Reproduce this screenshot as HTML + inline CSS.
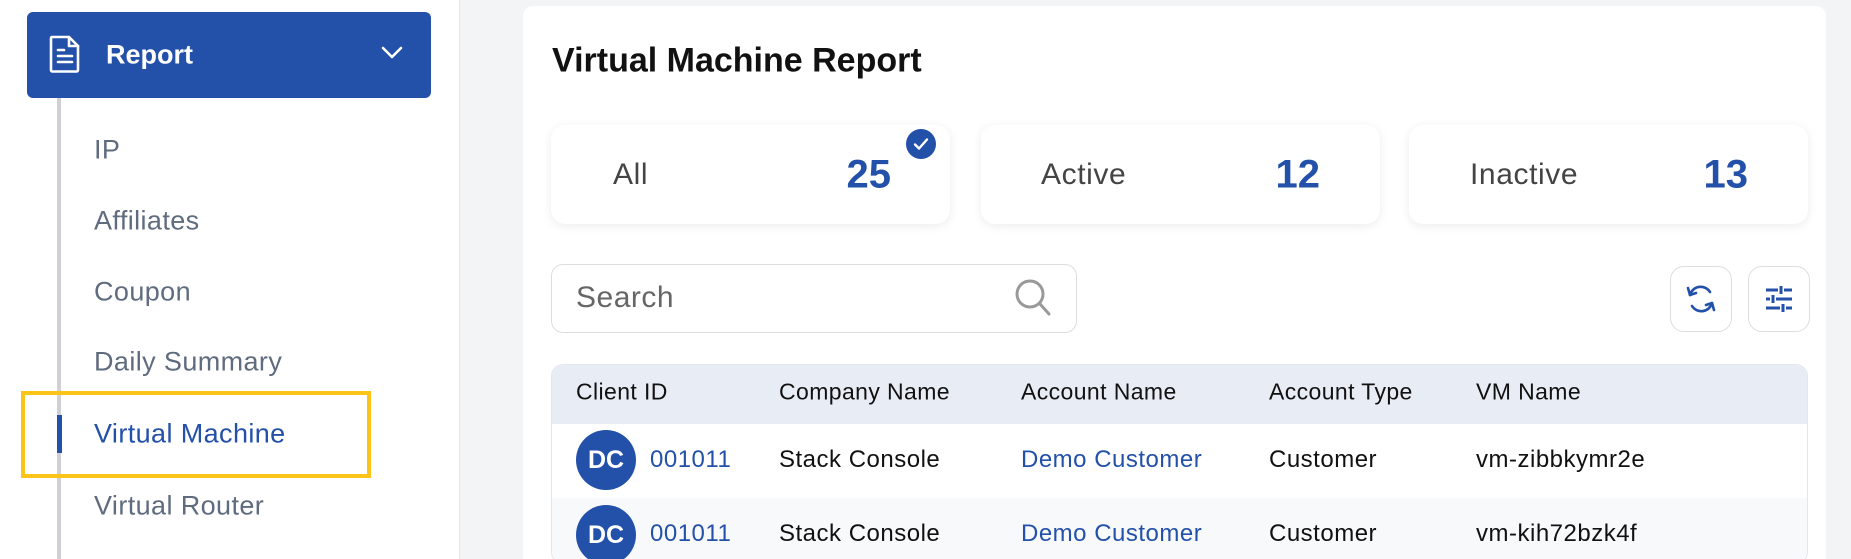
<!DOCTYPE html>
<html style="overflow:hidden"><head><style>
*{box-sizing:border-box;margin:0;padding:0}
html,body{width:1851px;height:559px;overflow:hidden}
body{background:#f3f4f6;font-family:"Liberation Sans",sans-serif;position:relative}
.abs{position:absolute}
.side{left:0;top:0;width:460px;height:559px;background:#fff;border-right:1px solid #e6e7ea}
.btn{left:27px;top:12px;width:404px;height:86px;background:#2350a9;border-radius:6px;color:#fff}
.mi{left:94px;font-size:27px;letter-spacing:0.4px;color:#5f6b7e;transform:translateY(-50%);white-space:nowrap}
.card{left:523px;top:6px;width:1303px;height:553px;background:#fff;border-radius:10px 10px 0 0}
.stat{top:125px;width:399px;height:99px;background:#fff;border-radius:14px;box-shadow:0 2px 10px rgba(0,0,0,.08)}
.stat .l{position:absolute;top:50%;transform:translateY(-50%);font-size:30px;letter-spacing:0.6px;color:#444}
.stat .n{position:absolute;top:50%;transform:translateY(-50%);font-size:40px;font-weight:bold;color:#2350a9}
.th{top:392px;transform:translateY(-50%);font-size:23px;letter-spacing:0.4px;color:#111;white-space:nowrap}
.td{transform:translateY(-50%);font-size:24px;letter-spacing:0.5px;color:#111;white-space:nowrap}
.lk{color:#2350a9}
.av{width:60px;height:60px;border-radius:50%;background:#2350a9;color:#fff;font-weight:bold;font-size:25px;display:flex;align-items:center;justify-content:center}
.ib{top:266px;width:62px;height:66px;border:1px solid #ddd;border-radius:14px;background:#fff;display:flex;align-items:center;justify-content:center}
</style></head><body>
<div class="abs side"></div>
<div class="abs btn">
<svg class="abs" style="left:22px;top:23px" width="32" height="38" viewBox="0 0 32 38" fill="none" stroke="#fff" stroke-width="2.6" stroke-linejoin="round" stroke-linecap="round"><path d="M3 2h17l9 9v24a1.5 1.5 0 0 1-1.5 1.5h-24A1.5 1.5 0 0 1 2 35V3.5A1.5 1.5 0 0 1 3 2z"/><path d="M20 2v9h9"/><path d="M9 15h6M9 21h14M9 27h14"/></svg>
<div class="abs" style="left:79px;top:50%;transform:translateY(-50%);font-size:27px;font-weight:bold">Report</div>
<svg class="abs" style="left:354px;top:34px" width="22" height="14" viewBox="0 0 22 14" fill="none" stroke="#fff" stroke-width="2.6" stroke-linecap="round" stroke-linejoin="round"><path d="M2 2l9 9 9-9"/></svg>
</div>
<div class="abs" style="left:57px;top:98px;width:4px;height:461px;background:#cfd0d3"></div>
<div class="abs" style="left:57px;top:415px;width:5px;height:38px;background:#2350a9"></div>
<div class="abs mi" style="top:150px">IP</div>
<div class="abs mi" style="top:221px">Affiliates</div>
<div class="abs mi" style="top:292px">Coupon</div>
<div class="abs mi" style="top:362px">Daily Summary</div>
<div class="abs mi" style="top:434px;color:#2350a9">Virtual Machine</div>
<div class="abs mi" style="top:506px">Virtual Router</div>
<div class="abs" style="left:21px;top:391px;width:350px;height:87px;border:4px solid #fcc419"></div>

<div class="abs card"></div>
<div class="abs" style="left:552px;top:61px;transform:translateY(-50%);font-size:34px;font-weight:bold;color:#111;white-space:nowrap">Virtual Machine Report</div>

<div class="abs stat" style="left:551px"><span class="l" style="left:62px">All</span><span class="n" style="right:59px">25</span></div>
<div class="abs" style="left:906px;top:129px;width:30px;height:30px;border-radius:50%;background:#2350a9"><svg width="30" height="30" viewBox="0 0 30 30" fill="none" stroke="#fff" stroke-width="2.4" stroke-linecap="round" stroke-linejoin="round"><path d="M9 15.5l4 4 8-9"/></svg></div>
<div class="abs stat" style="left:981px"><span class="l" style="left:60px">Active</span><span class="n" style="right:60px">12</span></div>
<div class="abs stat" style="left:1409px"><span class="l" style="left:61px">Inactive</span><span class="n" style="right:60px">13</span></div>

<div class="abs" style="left:551px;top:264px;width:526px;height:69px;border:1px solid #ddd;border-radius:12px;background:#fff"></div>
<div class="abs" style="left:576px;top:298px;transform:translateY(-50%);font-size:30px;letter-spacing:0.5px;color:#666">Search</div>
<svg class="abs" style="left:1012px;top:276px" width="42" height="42" viewBox="0 0 42 42" fill="none" stroke="#999" stroke-width="3" stroke-linecap="round"><circle cx="18" cy="18" r="13"/><path d="M28 28l9 10"/></svg>

<div class="abs ib" style="left:1670px"><svg width="32" height="30" viewBox="0 0 32 30" fill="none" stroke="#2350a9" stroke-width="2.6" stroke-linecap="round" stroke-linejoin="round"><path d="M5 11a11 11 0 0 1 20-3"/><path d="M3 4l2 7 6-2"/><path d="M27 19a11 11 0 0 1-20 3"/><path d="M29 26l-2-7-6 2"/></svg></div>
<div class="abs ib" style="left:1748px"><svg width="28" height="28" viewBox="0 0 28 28" fill="none" stroke="#2350a9" stroke-width="3"><path d="M1 5h12M19 5h8M16 1v8"/><path d="M1 14h4M11 14h16M8 10v8"/><path d="M1 23h14M21 23h6M18 19v8"/></svg></div>

<div class="abs" style="left:551px;top:364px;width:1257px;height:200px;border:1px solid #e3e6ee;border-radius:12px;overflow:hidden;background:#fff">
<div style="height:59px;background:#e8ecf5"></div>
<div style="height:74px;background:#fff"></div>
<div style="height:70px;background:#f8f9fb"></div>
</div>
<div class="abs th" style="left:576px">Client ID</div>
<div class="abs th" style="left:779px">Company Name</div>
<div class="abs th" style="left:1021px">Account Name</div>
<div class="abs th" style="left:1269px">Account Type</div>
<div class="abs th" style="left:1476px">VM Name</div>

<div class="abs av" style="left:576px;top:430px">DC</div>
<div class="abs td lk" style="left:650px;top:460px">001011</div>
<div class="abs td" style="left:779px;top:460px">Stack Console</div>
<div class="abs td lk" style="left:1021px;top:460px">Demo Customer</div>
<div class="abs td" style="left:1269px;top:460px">Customer</div>
<div class="abs td" style="left:1476px;top:460px">vm-zibbkymr2e</div>

<div class="abs av" style="left:576px;top:505px">DC</div>
<div class="abs td lk" style="left:650px;top:534px">001011</div>
<div class="abs td" style="left:779px;top:534px">Stack Console</div>
<div class="abs td lk" style="left:1021px;top:534px">Demo Customer</div>
<div class="abs td" style="left:1269px;top:534px">Customer</div>
<div class="abs td" style="left:1476px;top:534px">vm-kih72bzk4f</div>
</body></html>
